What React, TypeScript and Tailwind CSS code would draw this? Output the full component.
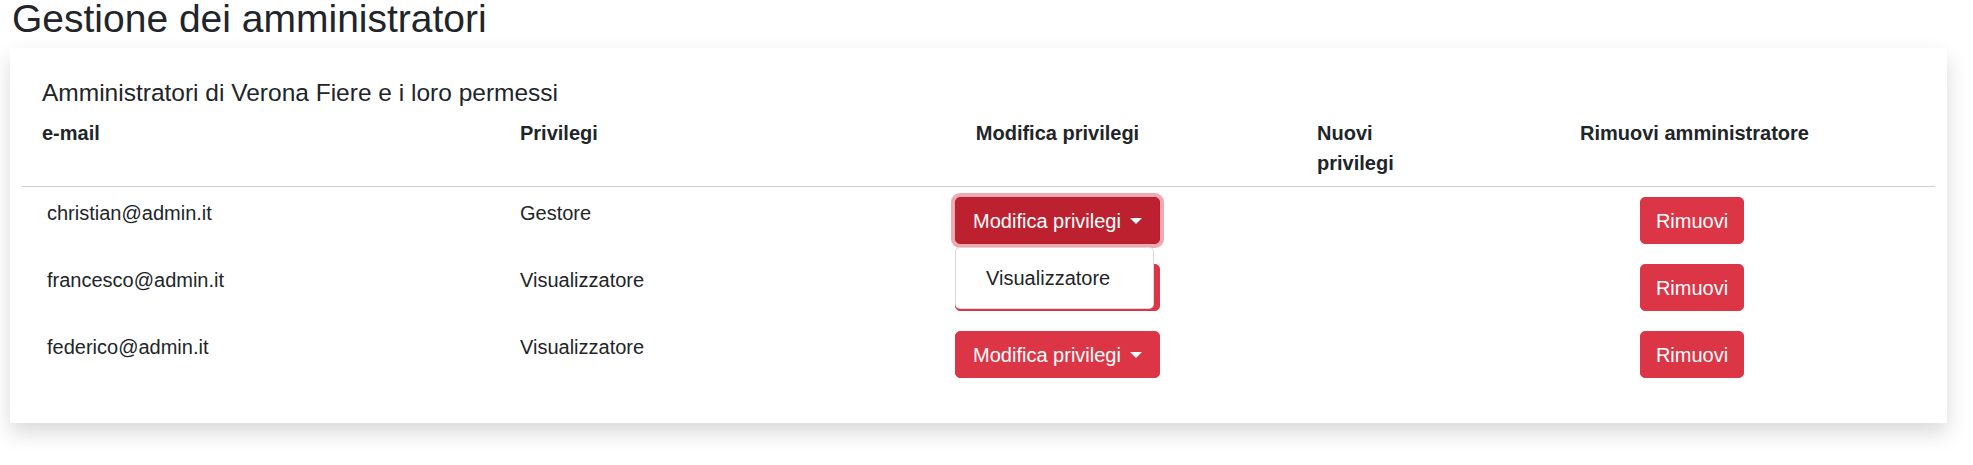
import { useState } from "react";

type Admin = { email: string; role: string };

const ADMINS: Admin[] = [
  { email: "christian@admin.it", role: "Gestore" },
  { email: "francesco@admin.it", role: "Visualizzatore" },
  { email: "federico@admin.it", role: "Visualizzatore" },
];

// colonne della tabella (larghezze fisse come nello screenshot)
const COLS = "grid grid-cols-[478px_318px_479px_156px_483px]";

function Caret() {
  return (
    <span className="ml-[9px] inline-block h-0 w-0 border-x-[6px] border-t-[6px] border-x-transparent border-t-white" />
  );
}

function PrivilegesDropdown({ open, current }: { open: boolean; current: string }) {
  const other = current === "Gestore" ? "Visualizzatore" : "Gestore";
  return (
    <div className="relative inline-block">
      <button
        type="button"
        className={
          open
            ? "inline-flex h-[47px] items-center rounded-[5px] border border-[#b21f2d] bg-[#bd2130] px-[17px] text-[20px] leading-[30px] text-white shadow-[0_0_0_4px_rgba(225,83,97,0.5)]"
            : "inline-flex h-[47px] items-center rounded-[5px] border border-[#dc3545] bg-[#dc3545] px-[17px] text-[20px] leading-[30px] text-white"
        }
      >
        Modifica privilegi
        <Caret />
      </button>
      {open && (
        <div className="absolute left-0 top-full z-10 mt-[3px] w-[199px] rounded-[5px] border border-black/15 bg-white py-[10px] text-left">
          <div className="px-[30px] py-[5px] text-[20px] leading-[30px] text-[#212529]">{other}</div>
        </div>
      )}
    </div>
  );
}

export default function App() {
  const [openRow] = useState(0);

  return (
    <div className="min-h-screen bg-white text-[#212529] [font-family:'Liberation_Sans',Arial,sans-serif]">
      <h1 className="pl-[12px] text-[39px] font-normal leading-[38px]">Gestione dei amministratori</h1>

      <div className="ml-[10px] mt-[10px] w-[1937px] bg-white px-[12px] pb-[35px] pt-[30px] shadow-[0_10px_20px_rgba(0,0,0,0.15)]">
        <h5 className="pl-[20px] text-[24.5px] leading-[30px]">Amministratori di Verona Fiere e i loro permessi</h5>

        <div className={`${COLS} border-b border-[#cfcfcf] pb-[8px] pt-[10px] text-[20px] font-bold leading-[30px]`}>
          <div className="px-[20px]">e-mail</div>
          <div className="px-[20px]">Privilegi</div>
          <div className="px-[20px] text-center">Modifica privilegi</div>
          <div className="px-[20px]">Nuovi privilegi</div>
          <div className="px-[20px] text-center">Rimuovi amministratore</div>
        </div>

        {ADMINS.map((a, i) => (
          <div key={a.email} className={`${COLS} py-[10px] text-[20px] leading-[30px]`}>
            <div className="pl-[25px] pt-[1px]">{a.email}</div>
            <div className="pl-[20px] pt-[1px]">{a.role}</div>
            <div className="flex justify-center">
              <PrivilegesDropdown open={i === openRow} current={a.role} />
            </div>
            <div />
            <div className="flex justify-center pr-[5px]">
              <button
                type="button"
                className="inline-flex h-[47px] items-center rounded-[5px] border border-[#dc3545] bg-[#dc3545] px-[15px] text-[20px] leading-[30px] text-white"
              >
                Rimuovi
              </button>
            </div>
          </div>
        ))}
      </div>
    </div>
  );
}
